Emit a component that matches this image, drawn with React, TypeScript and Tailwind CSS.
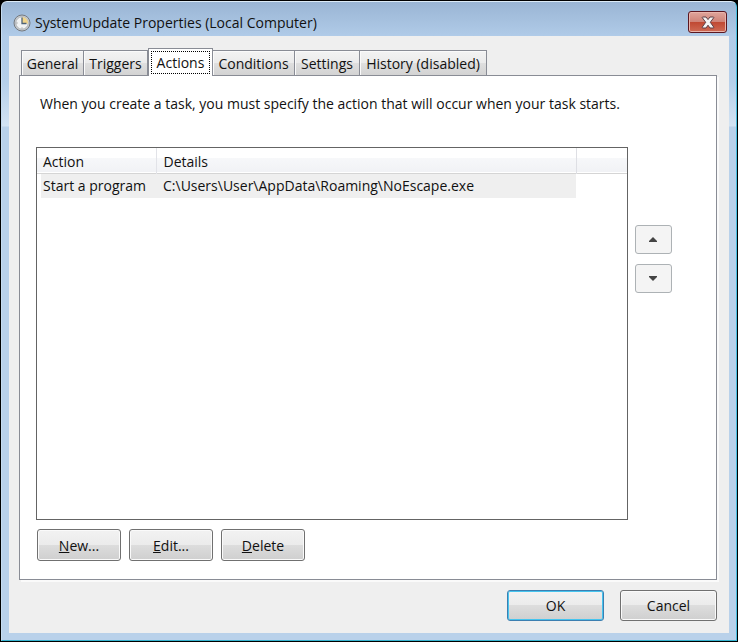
import { useState } from "react";
import type { ReactNode } from "react";

const tabs = [
  { name: "General", width: "w-[63px]" },
  { name: "Triggers", width: "w-[64px]" },
  { name: "Actions", width: "w-[65px]" },
  { name: "Conditions", width: "w-[82px]" },
  { name: "Settings", width: "w-[65px]" },
  { name: "History (disabled)", width: "w-[127px]" },
];

function ClockIcon() {
  return (
    <svg width="18" height="18" viewBox="0 0 18 18" aria-hidden="true">
      <circle cx="9" cy="9" r="8" fill="#c9cdd0" stroke="#74797f" strokeWidth="1" />
      <circle cx="9" cy="9" r="6.2" fill="#f1f3f4" stroke="#a4a8ac" strokeWidth="0.8" />
      <path d="M9 9.5V3A6 6 0 0 1 15 9.5Z" fill="#f0d48a" />
      <path d="M9 3.5V9.5H13.5" fill="none" stroke="#4f6378" strokeWidth="1.3" />
      <path d="M3.5 9H4.5M9 13.5V14.5" stroke="#888" strokeWidth="1" />
    </svg>
  );
}

function CloseIcon() {
  return (
    <svg width="14" height="13" viewBox="0 0 14 13" aria-hidden="true">
      <path
        d="M1.5 1H5L7 3.6L9 1H12.500L12.800 1.600L9.300 6.300L12.800 11.200L12.500 12H9L7 9.200L5 12H1.500L1.200 11.200L4.700 6.300L1.200 1.600Z"
        fill="#f4f4f4"
        stroke="#5d3f45"
        strokeWidth="1"
        strokeLinejoin="round"
      />
    </svg>
  );
}

function PushButton({ children, className }: { children: ReactNode; className: string }) {
  return (
    <button
      type="button"
      className={`rounded-[3px] border bg-[linear-gradient(#f2f2f2,#ebebeb_50%,#dddddd_50%,#cfcfcf)] ${className}`}
    >
      {children}
    </button>
  );
}

function MoveButton({ label, path }: { label: string; path: string }) {
  return (
    <button
      type="button"
      aria-label={label}
      className="flex h-[29px] w-[37px] items-center justify-center rounded-[3px] border border-[#adb2b5] bg-[#f4f4f4] pr-px"
    >
      <svg width="8" height="5" viewBox="0 0 8 5" aria-hidden="true">
        <path d={path} fill="#444" />
      </svg>
    </button>
  );
}

export default function App() {
  const [active, setActive] = useState("Actions");

  return (
    <div className="min-h-screen bg-black p-px font-['Open_Sans','Noto_Sans',sans-serif] text-sm text-[#111]">
      <div className="flex min-h-[calc(100vh-2px)] flex-col rounded-t-md border border-t-[#dcebf7] border-r-[#48bfe0] border-b-[#35b3cf] border-l-[#c6dcf0] bg-[linear-gradient(#9ab5d4,#b0cbe8_34px,#b5cfea_80px,#d3e3f3_124px,#b9d1ea_125px)] px-[7px] pb-[7px]">
        <header className="-mx-[7px] flex h-[34px] items-start justify-between pr-[9px] pl-[11px]">
          <div className="flex h-[34px] items-center gap-1 pt-[7px]">
            <ClockIcon />
            <h1 className="leading-5">SystemUpdate Properties (Local Computer)</h1>
          </div>
          <button
            type="button"
            aria-label="Close"
            className="mt-[9px] flex h-[22px] w-[39px] items-center justify-center rounded-[3px] border border-[#5b1720] bg-[linear-gradient(#dfa59c,#d08478_48%,#bf4630_48%,#cf6b55)] shadow-[inset_0_0_0_1px_#e9b5ac]"
          >
            <CloseIcon />
          </button>
        </header>

        <main className="flex grow flex-col bg-[#efefef] px-[10px] pt-3">
          <div role="tablist" className="flex h-[27px] items-end pl-[2px]">
            {tabs.map((tab) =>
              tab.name === active ? (
                <button
                  key={tab.name}
                  type="button"
                  role="tab"
                  aria-selected="true"
                  className={`relative z-10 -mb-px flex h-7 shrink-0 border border-b-0 border-[#898c95] bg-white px-[2px] pt-[2px] ${tab.width}`}
                >
                  <span className="flex h-[23px] grow items-center justify-center border border-dotted border-black whitespace-nowrap">
                    {tab.name}
                  </span>
                </button>
              ) : (
                <button
                  key={tab.name}
                  type="button"
                  role="tab"
                  aria-selected="false"
                  onClick={() => setActive(tab.name)}
                  className={`flex h-[25px] shrink-0 items-center justify-center border-t border-r border-[#898c95] bg-[linear-gradient(#f3f3f3,#ebebeb_50%,#dfdfdf_50%,#d3d3d3)] pt-px whitespace-nowrap shadow-[inset_1px_1px_0_#fafafa] first:border-l ${tab.width}`}
                >
                  {tab.name}
                </button>
              ),
            )}
          </div>

          <section
            role="tabpanel"
            className="mr-[2px] flex grow flex-col border border-[#898c95] bg-white px-4 pb-[18px] shadow-[2px_2px_0_#fafafa]"
          >
            <p className="mt-[18px] ml-1 leading-5">
              When you create a task, you must specify the action that will occur when your task starts.
            </p>
            <div className="mt-[33px] flex grow gap-[7px] pr-7">
              <div className="grow border border-[#646464] bg-white">
                <table className="w-full table-fixed border-collapse text-left">
                  <colgroup>
                    <col className="w-[4px]" />
                    <col className="w-[115px]" />
                    <col />
                    <col className="w-[51px]" />
                  </colgroup>
                  <thead>
                    <tr className="h-[25px] border-b border-[#d5d5d5] bg-[linear-gradient(#ffffff_40%,#f7f8fa_40%,#f1f2f5)]">
                      <th colSpan={2} className="border-r border-[#e2e3e8] pt-[3px] pb-0 pl-[6px] font-normal">
                        Action
                      </th>
                      <th className="border-r border-[#dedfe4] pt-[3px] pb-0 pl-[7px] font-normal">Details</th>
                      <td />
                    </tr>
                  </thead>
                  <tbody>
                    <tr className="h-[25px]">
                      <td />
                      <td className="bg-[#efefef] pt-px pb-0 pl-[2px] whitespace-nowrap">Start a program</td>
                      <td className="bg-[#efefef] pt-px pb-0 pl-[7px]">C:\Users\User\AppData\Roaming\NoEscape.exe</td>
                      <td />
                    </tr>
                  </tbody>
                </table>
              </div>
              <div className="flex flex-col gap-[10px] pt-[78px]">
                <MoveButton label="Move up" path="M0 5V4L4 0L8 4V5Z" />
                <MoveButton label="Move down" path="M0 0V1L4 5L8 1V0Z" />
              </div>
            </div>
            <div className="mt-[9px] ml-px flex gap-2">
              <PushButton className="h-8 w-[84px] border-[#707070] pt-px shadow-[inset_0_0_0_1px_#fafafa]">
                <u>N</u>ew...
              </PushButton>
              <PushButton className="h-8 w-[84px] border-[#707070] pt-px shadow-[inset_0_0_0_1px_#fafafa]">
                <u>E</u>dit...
              </PushButton>
              <PushButton className="h-8 w-[84px] border-[#707070] pt-px shadow-[inset_0_0_0_1px_#fafafa]">
                <u>D</u>elete
              </PushButton>
            </div>
          </section>

          <footer className="flex justify-end gap-4 pt-[10px] pr-[2px] pb-3">
            <PushButton className="h-[31px] w-[97px] border-[#3c7fb1] shadow-[inset_0_0_0_1px_#46c4ee]">OK</PushButton>
            <PushButton className="h-[31px] w-[97px] border-[#707070] shadow-[inset_0_0_0_1px_#fafafa]">
              Cancel
            </PushButton>
          </footer>
        </main>
      </div>
    </div>
  );
}
